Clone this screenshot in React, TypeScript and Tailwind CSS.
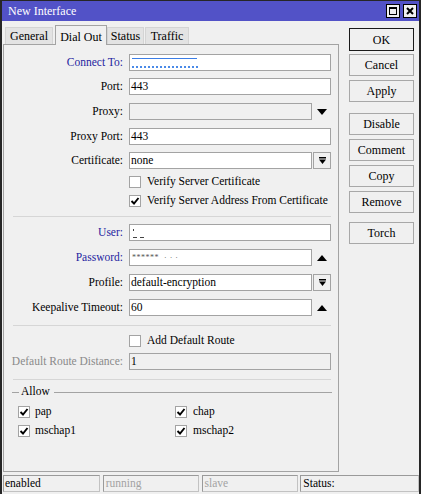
import React from 'react'

const BLUE = 'text-[#1e1ea0]'

function Check({ checked }: { checked?: boolean }) {
  return (
    <span className="w-[12px] h-[12px] shrink-0 border border-[#a3a3a3] bg-white flex items-center justify-center">
      {checked && (
        <svg width="10" height="10" viewBox="0 0 10 10">
          <path d="M1.5 5 L4 7.5 L8.5 2" fill="none" stroke="#000" strokeWidth="1.9" />
        </svg>
      )}
    </span>
  )
}

function DropBtn() {
  return (
    <div className="w-[18px] h-[17px] ml-[1px] border border-[#a3a3a3] bg-[#f0f0f0] flex items-center justify-center">
      <svg width="9" height="9" viewBox="0 0 9 9">
        <rect x="1" y="1" width="7" height="1.5" fill="#000" />
        <path d="M1 3.5 H8 L4.5 8 Z" fill="#000" />
      </svg>
    </div>
  )
}

function Arrow({ up }: { up?: boolean }) {
  return (
    <div className="w-[19px] h-[17px] flex items-center justify-center">
      <svg width="10" height="6" viewBox="0 0 10 6">
        {up ? <path d="M0 6 H10 L5 0 Z" fill="#000" /> : <path d="M0 0 H10 L5 6 Z" fill="#000" />}
      </svg>
    </div>
  )
}

function Row({
  label,
  labelClass = 'text-black',
  children,
  className = '',
}: {
  label: string
  labelClass?: string
  children: React.ReactNode
  className?: string
}) {
  return (
    <div className={`flex items-center h-[17px] ${className}`}>
      <div className={`w-[119px] text-right whitespace-nowrap ${labelClass}`}>{label}</div>
      <div className="ml-[6px] flex items-center">{children}</div>
    </div>
  )
}

function Field({ value, w = 'w-[202px]', disabled }: { value?: React.ReactNode; w?: string; disabled?: boolean }) {
  return (
    <div
      className={`${w} h-[17px] border border-[#a3a3a3] ${disabled ? 'bg-[#f0f0f0]' : 'bg-white'} pl-[1px] flex items-center leading-none`}
    >
      {value}
    </div>
  )
}

function CheckRow({ label, checked, className = '' }: { label: string; checked?: boolean; className?: string }) {
  return (
    <div className={`flex items-center h-[14px] pl-[125px] ${className}`}>
      <Check checked={checked} />
      <span className="ml-[6px] whitespace-nowrap">{label}</span>
    </div>
  )
}

const SIDE_BUTTONS = [
  { label: 'OK', mt: 'mt-[7px]', def: true },
  { label: 'Cancel', mt: 'mt-[3px]' },
  { label: 'Apply', mt: 'mt-[4px]' },
  { label: 'Disable', mt: 'mt-[11px]' },
  { label: 'Comment', mt: 'mt-[4px]' },
  { label: 'Copy', mt: 'mt-[4px]' },
  { label: 'Remove', mt: 'mt-[4px]' },
  { label: 'Torch', mt: 'mt-[9px]' },
]

export default function App() {
  return (
    <div className="w-[421px] h-[494px] bg-[#f0f0f0] border-t border-l-2 border-r-2 border-[#262626] font-[family-name:Liberation_Serif,serif] text-[12px] text-black flex flex-col overflow-hidden">
      {/* Title bar */}
      <div className="h-[20px] bg-[#5252c7] flex items-center justify-between pl-[6px] pr-[2px]">
        <span className="text-white text-[12px]">New Interface</span>
        <div className="flex gap-[3px]">
          <div className="w-[14px] h-[14px] bg-[#f0f0f0] border border-black flex items-center justify-center">
            <div className="w-[8px] h-[8px] border border-black border-t-2" />
          </div>
          <div className="w-[14px] h-[14px] bg-[#f0f0f0] border border-black flex items-center justify-center">
            <svg width="8" height="8" viewBox="0 0 8 8">
              <path d="M1 1 L7 7 M7 1 L1 7" stroke="#000" strokeWidth="2" />
            </svg>
          </div>
        </div>
      </div>

      {/* Body */}
      <div className="h-[451px] flex">
        <div className="pl-[1px] flex flex-col">
          {/* Tabs */}
          <div className="h-[23px] flex items-end pl-[2px]">
            <div className="w-[48px] h-[17px] bg-[#e3e3e3] border border-b-0 border-[#d4d4d4] flex items-center justify-center">
              General
            </div>
            <div className="ml-[2px] w-[52px] h-[20px] mb-[-1px] relative z-10 bg-[#f0f0f0] border border-b-0 border-[#a3a3a3] flex items-start pt-[2px] justify-center">
              Dial Out
            </div>
            <div className="w-[37px] h-[17px] bg-[#e3e3e3] border border-b-0 border-[#d4d4d4] flex items-center justify-center">
              Status
            </div>
            <div className="ml-[1px] w-[44px] h-[17px] bg-[#e3e3e3] border border-b-0 border-[#d4d4d4] flex items-center justify-center">
              Traffic
            </div>
          </div>

          {/* Panel */}
          <div className="w-[336px] h-[428px] border border-[#a3a3a3] flex flex-col text-[11.5px]">
            <Row label="Connect To:" labelClass={BLUE} className="mt-[9px]">
              <Field
                value={
                  <div className="flex flex-col gap-[7px] pl-[1px] pt-[1px]">
                    <div className="w-[65px] h-[1px] bg-[#3b7de6]" />
                    <div className="w-[66px] border-b-2 border-dotted border-[#4a8ae8]" />
                  </div>
                }
              />
            </Row>
            <Row label="Port:" className="mt-[7px]">
              <Field value="443" />
            </Row>
            <Row label="Proxy:" className="mt-[8px]">
              <Field w="w-[183px]" disabled />
              <Arrow />
            </Row>
            <Row label="Proxy Port:" className="mt-[8px]">
              <Field value="443" />
            </Row>
            <Row label="Certificate:" className="mt-[7px]">
              <Field w="w-[183px]" value="none" />
              <DropBtn />
            </Row>
            <CheckRow label="Verify Server Certificate" className="mt-[6px]" />
            <CheckRow label="Verify Server Address From Certificate" checked className="mt-[5px]" />

            <div className="mt-[8px] ml-[9px] w-[318px] h-[1px] bg-[#d6d6d6]" />

            <Row label="User:" labelClass={BLUE} className="mt-[7px]">
              <Field
                value={
                  <div className="flex flex-col pl-[2px] pt-[1px]">
                    <div className="w-[1px] h-[2px] bg-[#444]" />
                    <div className="mt-[6px] flex gap-[3px]">
                      <div className="w-[4px] h-[1px] bg-[#444]" />
                      <div className="w-[4px] h-[1px] bg-[#444]" />
                    </div>
                  </div>
                }
              />
            </Row>
            <Row label="Password:" labelClass={BLUE} className="mt-[8px]">
              <Field
                w="w-[183px]"
                value={<span className="text-[8px] text-[#555] tracking-[0.5px] pl-[1px]">******&nbsp;&nbsp;·&nbsp;·&nbsp;·</span>}
              />
              <Arrow up />
            </Row>
            <Row label="Profile:" className="mt-[8px]">
              <Field w="w-[183px]" value="default-encryption" />
              <DropBtn />
            </Row>
            <Row label="Keepalive Timeout:" className="mt-[8px]">
              <Field w="w-[183px]" value="60" />
              <Arrow up />
            </Row>

            <div className="mt-[9px] ml-[9px] w-[318px] h-[1px] bg-[#d6d6d6]" />

            <CheckRow label="Add Default Route" className="mt-[8px]" />
            <Row label="Default Route Distance:" labelClass="text-[#8a8a8a]" className="mt-[5px]">
              <Field value="1" disabled />
            </Row>

            <div className="mt-[9px] ml-[9px] w-[318px] h-[1px] bg-[#d6d6d6]" />

            {/* Allow group */}
            <div className="mt-[5px] h-[14px] flex items-center">
              <div className="ml-[8px] w-[7px] h-[1px] bg-[#a3a3a3]" />
              <span className="ml-[2px]">Allow</span>
              <div className="ml-[4px] w-[278px] h-[1px] bg-[#a3a3a3]" />
            </div>
            <div className="mt-[6px] flex h-[14px] items-center pl-[14px]">
              <div className="w-[157px] flex items-center">
                <Check checked />
                <span className="ml-[5px]">pap</span>
              </div>
              <Check checked />
              <span className="ml-[6px]">chap</span>
            </div>
            <div className="mt-[5px] flex h-[14px] items-center pl-[14px]">
              <div className="w-[157px] flex items-center">
                <Check checked />
                <span className="ml-[5px]">mschap1</span>
              </div>
              <Check checked />
              <span className="ml-[6px]">mschap2</span>
            </div>
          </div>
        </div>

        {/* Side buttons */}
        <div className="ml-[10px] flex flex-col">
          {SIDE_BUTTONS.map((b) => (
            <div
              key={b.label}
              className={`${b.mt} w-[65px] ${b.def ? 'h-[23px] border-[#1a1a1a]' : 'h-[22px] border-[#a8a8a8]'} border bg-[#f0f0f0] flex items-center justify-center`}
            >
              {b.label}
            </div>
          ))}
        </div>
      </div>

      {/* Status bar */}
      <div className="mt-[3px] h-[17px] flex pl-[1px] text-[11.5px]">
        <div className="w-[97px] border border-[#c2c2c2] border-t-[#9a9a9a] border-l-[#9a9a9a] pl-[1px] flex items-center">enabled</div>
        <div className="ml-[3px] w-[96px] border border-[#c2c2c2] border-t-[#9a9a9a] border-l-[#9a9a9a] pl-[2px] flex items-center text-[#a3a3a3]">running</div>
        <div className="ml-[3px] w-[97px] border border-[#c2c2c2] border-t-[#9a9a9a] border-l-[#9a9a9a] pl-[2px] flex items-center text-[#a3a3a3]">slave</div>
        <div className="ml-[2px] w-[119px] border border-[#c2c2c2] border-t-[#9a9a9a] border-l-[#9a9a9a] pl-[2px] flex items-center">Status:</div>
      </div>
    </div>
  )
}
